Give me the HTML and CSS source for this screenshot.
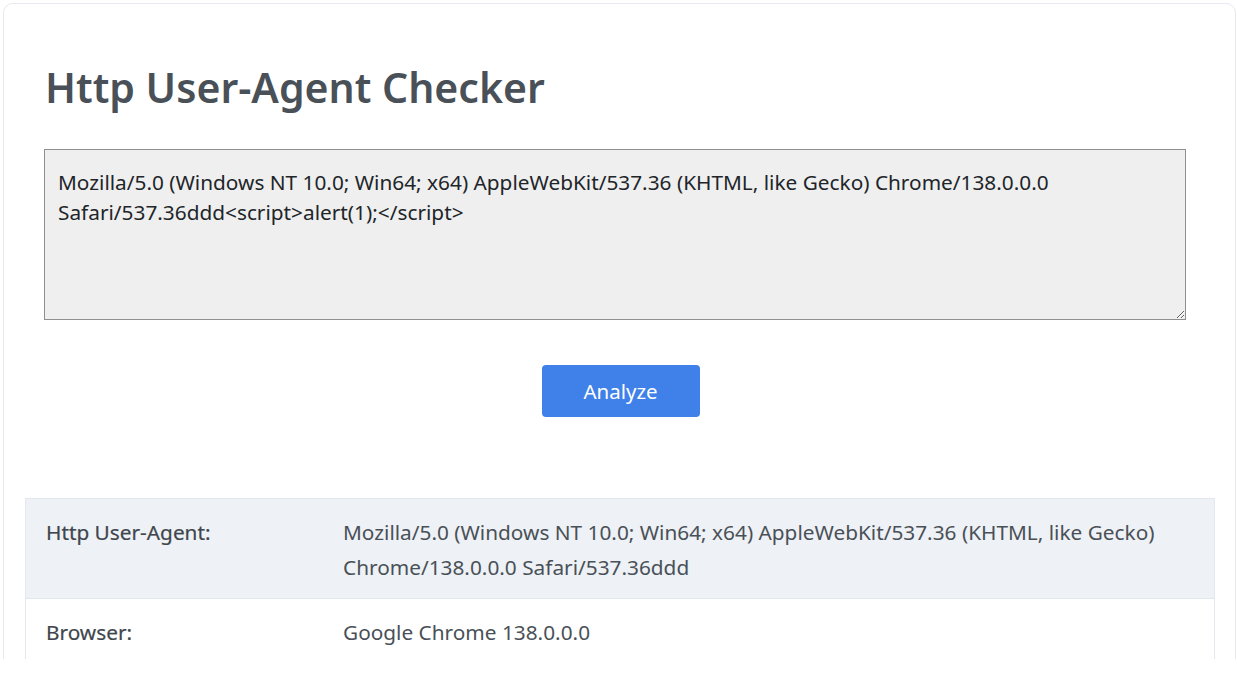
FILE: index.html
```html
<!DOCTYPE html>
<html>
<head>
<meta charset="utf-8">
<link rel="stylesheet" href="styles.css">
</head>
<body>
<div class="viewport">
  <div class="card">
    <div class="form">
      <h1 class="title">Http User-Agent Checker</h1>
      <textarea class="ua-input">Mozilla/5.0 (Windows NT 10.0; Win64; x64) AppleWebKit/537.36 (KHTML, like Gecko) Chrome/138.0.0.0 Safari/537.36ddd&lt;script&gt;alert(1);&lt;/script&gt;</textarea>
      <div class="actions"><button class="btn">Analyze</button></div>
    </div>
    <table class="result">
      <tr class="shaded">
        <td class="label">Http User-Agent:</td>
        <td class="value">Mozilla/5.0 (Windows NT 10.0; Win64; x64) AppleWebKit/537.36 (KHTML, like Gecko) Chrome/138.0.0.0 Safari/537.36ddd</td>
      </tr>
      <tr class="last">
        <td class="label">Browser:</td>
        <td class="value">Google Chrome 138.0.0.0</td>
      </tr>
    </table>
  </div>
</div>
</body>
</html>
```
FILE: styles.css
```css
html, body {
  margin: 0;
  padding: 0;
  background: #fff;
}
.viewport {
  height: 659px;
  overflow: hidden;
  padding: 3px 1px 0 3px;
  box-sizing: border-box;
  font-family: "Noto Sans", "Open Sans", sans-serif;
  color: #495057;
}
.card {
  border: 1px solid #e6eaee;
  border-radius: 10px;
  padding: 0 20px 40px 21px;
  background: #fff;
}
.form {
  padding: 57px 29px 0 19px;
}
.title {
  margin: 0 0 36px 1px;
  font-size: 41px;
  line-height: 52px;
  font-weight: 600;
  color: #495057;
}
.ua-input {
  display: block;
  width: 100%;
  box-sizing: border-box;
  height: 171px;
  background: #efefef;
  border: 1px solid #8f8f8f;
  border-radius: 0;
  padding: 17px 13px;
  font-family: inherit;
  font-size: 20.8px;
  line-height: 30px;
  color: #212529;
  resize: vertical;
}
.actions {
  display: flex;
  justify-content: center;
  padding: 45px 0 81px 0;
}
.btn {
  width: 158px;
  height: 52px;
  margin-left: 11px;
  border: none;
  border-radius: 4px;
  background: #4081e9;
  color: #fff;
  font-family: inherit;
  font-size: 20.5px;
  padding: 0;
}
.result {
  width: 100%;
  border-collapse: collapse;
  border: 1px solid #e3e8ee;
  font-size: 20.8px;
  line-height: 35px;
}
.result td {
  border-top: 1px solid #e3e8ee;
  padding: 16px 20px 13px 20px;
  vertical-align: top;
}
.last td {
  padding-bottom: 60px;
}
.result .label {
  width: 257px;
  font-weight: 400;
  color: #40464d;
  -webkit-text-stroke: 0.2px #40464d;
}
.result .value {
  color: #495057;
}
.shaded td {
  background: #eef1f5;
}
```
